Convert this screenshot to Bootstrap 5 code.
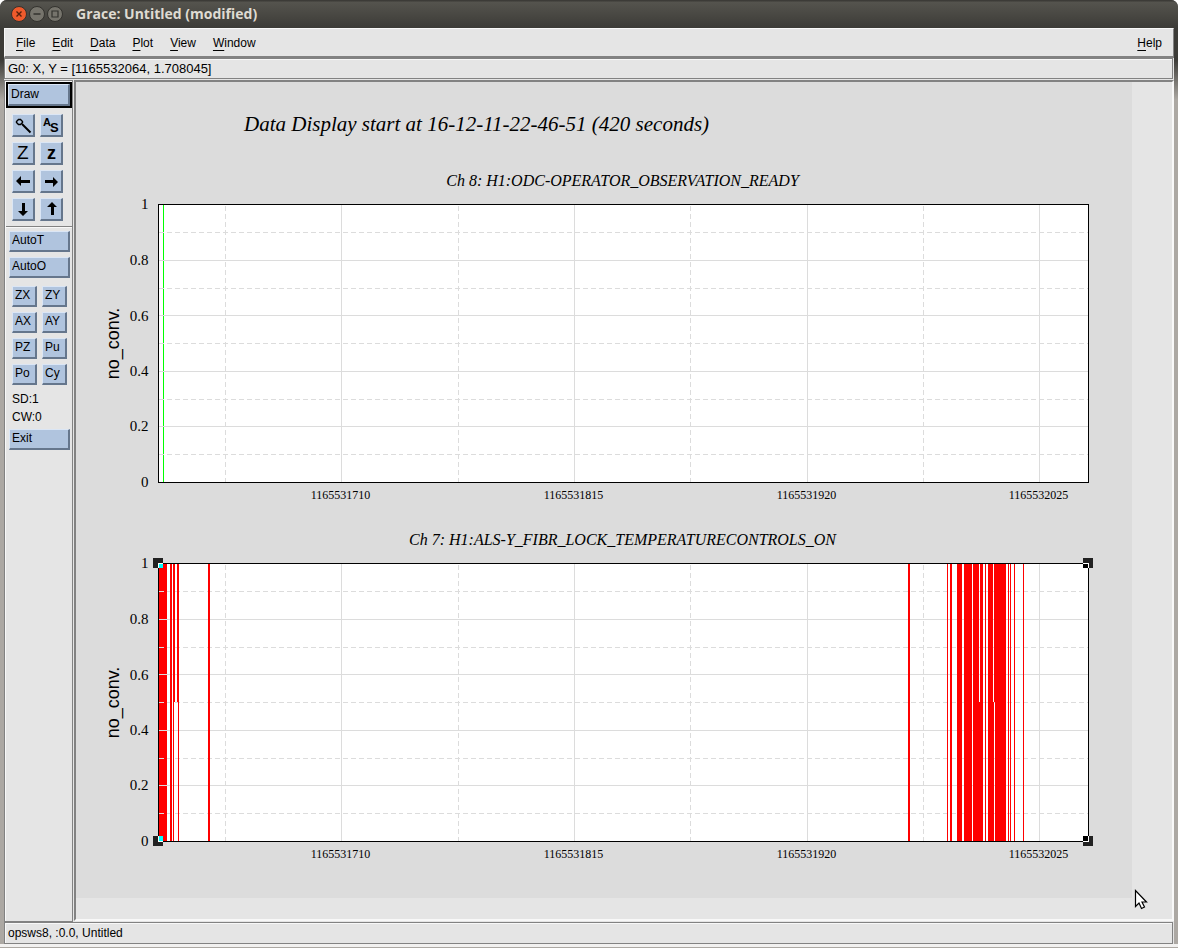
<!DOCTYPE html>
<html lang="en">
<head>
<meta charset="utf-8">
<meta name="viewport" content="width=device-width, initial-scale=1">
<title>Grace: Untitled (modified)</title>
<link href="https://cdn.jsdelivr.net/npm/bootstrap@5.3.0/dist/css/bootstrap.min.css" rel="stylesheet">
<style>
  :root { --face: #e5e5e5; --hi: #f8f8f8; --lo: #828282; --page: #dcdcdc; --blue: #b0c4de; }
  body { font: 12px/16px "Liberation Sans", Arial, sans-serif; color: #000; background: #fff; }
  .app-window { border-radius: 7px 7px 0 0; background: linear-gradient(#3c3b37 60px, #aca8a3 100px); }
  .title-bar { height: 28px; padding: 0 10px 0 11px; background: linear-gradient(#3c3b37 1px, #55544e 2px, #3c3b37); }
  .title-bar h1 { font: bold 14px/20px "Open Sans", "Noto Sans", sans-serif; color: #dfdbd2; padding-left: 13px; }
  .title-btns { gap: 2px; }
  .title-btn { width: 16px; height: 16px; }
  .title-btn svg { display: block; }
  .client { margin: 0 4px; background: var(--face); }
  .bevel-out { border: 1px solid; border-color: var(--hi) var(--lo) var(--lo) var(--hi); }
  .frame-line { border: 1px solid var(--lo); box-shadow: inset 1px 1px var(--hi); }
  .menu-bar { height: 30px; padding: 0 11px; border-bottom-width: 2px; gap: 17px; }
  .menu-item { color: inherit; line-height: 16px; }
  .menu-item u { text-underline-offset: 3px; }
  .locator { height: 21px; padding-left: 3px; margin-right: 1px; font-size: 13px; }
  .work { margin-top: 1px; }
  .tool-panel { width: 69px; padding: 1px 0 0 1px; }
  .plain-btn { background: var(--blue); border: solid; border-width: 1px 2px 2px 1px; border-color: #dbe6f5 #65768c #65768c #dbe6f5; border-radius: 0; padding: 0 2px 2px; height: 21px; line-height: 16px; font-size: 12px; text-align: left; color: #000; }
  .draw-ring { border: 2px solid #000; }
  .draw-ring .plain-btn { height: 22px; }
  .icon-grid { display: grid; grid-template-columns: 23px 23px; gap: 5px; padding: 6px 5px 5px 6px; }
  .icon-grid .plain-btn { height: 23px; padding: 0; }
  .icon-grid svg { display: block; }
  .text-grid { display: grid; grid-template-columns: 25px 25px; gap: 5px; padding: 3px 6px 5px; }
  .auto-stack { gap: 5px; padding: 3px 2px 5px 3px; }
  .exit-stack { padding: 3px 2px 0 3px; }
  .rule { border-top: 1px solid var(--lo); border-bottom: 1px solid var(--hi); }
  .readout { line-height: 18px; padding-left: 6px; }
  .canvas-frame { border: 2px solid; border-color: var(--lo) var(--hi) var(--hi) var(--lo); margin-left: 1px; margin-bottom: 1px; }
  .plot-page { display: block; background: var(--page); }
  .status-bar { height: 22px; padding-left: 3px; margin-right: 1px; }
  .bottom-edge { height: 4px; background: linear-gradient(#f2f1f0 3px, #aca8a3 3px); }
  .pointer { right: 30px; bottom: 37px; }
  .plot-page text { font-family: "Liberation Serif", "Times New Roman", serif; }
  .main-title { font-size: 21px; font-style: italic; }
  .sub-title { font-size: 16px; font-style: italic; text-anchor: middle; }
  .y-ticks { font-size: 15px; text-anchor: end; }
  .x-ticks { font-size: 12px; text-anchor: middle; }
  .plot-page .axis-name { font: 18px "Liberation Sans", Arial, sans-serif; text-anchor: middle; }
</style>
</head>
<body>
<div class="app-window d-flex flex-column vh-100 overflow-hidden position-relative">
  <header class="title-bar d-flex align-items-center flex-shrink-0">
    <div class="title-btns d-flex">
      <button type="button" class="title-btn btn p-0 border-0" aria-label="Close"><svg width="16" height="16"><circle cx="8" cy="8" r="7.5" fill="#ee5a2c" stroke="#35322e"/><path d="M5.500 5.500l5 5M10.500 5.500l-5 5" stroke="#55200c" stroke-width="1.400"/></svg></button>
      <button type="button" class="title-btn btn p-0 border-0" aria-label="Minimize"><svg width="16" height="16"><circle cx="8" cy="8" r="7.500" fill="#76746c" stroke="#33322e"/><path d="M4.500 8h7" stroke="#33322e" stroke-width="1.400"/></svg></button>
      <button type="button" class="title-btn btn p-0 border-0" aria-label="Maximize"><svg width="16" height="16"><circle cx="8" cy="8" r="7.500" fill="#76746c" stroke="#33322e"/><path d="M5 5h6v6h-6z" fill="none" stroke="#33322e" stroke-width="1.200"/></svg></button>
    </div>
    <h1 class="m-0">Grace: Untitled (modified)</h1>
  </header>

  <div class="client d-flex flex-column flex-grow-1">
    <nav class="menu-bar bevel-out d-flex align-items-center" aria-label="Main menu">
      <button type="button" class="menu-item border-0 bg-transparent p-0"><u>F</u>ile</button>
      <button type="button" class="menu-item border-0 bg-transparent p-0"><u>E</u>dit</button>
      <button type="button" class="menu-item border-0 bg-transparent p-0"><u>D</u>ata</button>
      <button type="button" class="menu-item border-0 bg-transparent p-0"><u>P</u>lot</button>
      <button type="button" class="menu-item border-0 bg-transparent p-0"><u>V</u>iew</button>
      <button type="button" class="menu-item border-0 bg-transparent p-0"><u>W</u>indow</button>
      <button type="button" class="menu-item border-0 bg-transparent p-0 ms-auto"><u>H</u>elp</button>
    </nav>
    <div class="locator frame-line d-flex align-items-center">G0: X, Y = [1165532064, 1.708045]</div>

    <main class="work d-flex flex-grow-1">
      <aside class="tool-panel frame-line flex-shrink-0">
        <div class="draw-ring"><button type="button" class="plain-btn w-100 d-block">Draw</button></div>
        <div class="icon-grid">
          <button type="button" class="plain-btn" aria-label="Zoom"><svg width="20" height="20" fill="none" stroke="#000"><path d="M5.500 4.500h2l2 2v1l-2 2h-2l-2-2v-1z" stroke-width="1.400"/><path d="M9 9l8.500 8.500" stroke-width="2"/></svg></button>
          <button type="button" class="plain-btn" aria-label="Autoscale"><svg width="20" height="20" font-family="Liberation Sans, Arial, sans-serif" font-weight="bold"><text x="2" y="11" font-size="11">A</text><text x="9" y="17" font-size="13">S</text></svg></button>
          <button type="button" class="plain-btn" aria-label="Zoom in"><svg width="20" height="20" font-family="Liberation Sans, Arial, sans-serif"><text x="4" y="16" font-size="19">Z</text></svg></button>
          <button type="button" class="plain-btn" aria-label="Zoom out"><svg width="20" height="20" font-family="Liberation Sans, Arial, sans-serif" font-weight="bold"><text x="6" y="16" font-size="18">z</text></svg></button>
          <button type="button" class="plain-btn" aria-label="Left"><svg width="20" height="20"><path d="M3 10l5-5v4h9v3H8v3z"/></svg></button>
          <button type="button" class="plain-btn" aria-label="Right"><svg width="20" height="20"><path d="M17 11l-5-5v3H4v3h8v4z"/></svg></button>
          <button type="button" class="plain-btn" aria-label="Down"><svg width="20" height="20"><path d="M10 17l-5-5h4V4h3v8h3z"/></svg></button>
          <button type="button" class="plain-btn" aria-label="Up"><svg width="20" height="20"><path d="M11 3l-5 5h4v8h3V8h3z"/></svg></button>
        </div>
        <div class="rule"></div>
        <div class="auto-stack d-flex flex-column">
          <button type="button" class="plain-btn">AutoT</button>
          <button type="button" class="plain-btn">AutoO</button>
        </div>
        <div class="text-grid">
          <button type="button" class="plain-btn">ZX</button><button type="button" class="plain-btn">ZY</button>
          <button type="button" class="plain-btn">AX</button><button type="button" class="plain-btn">AY</button>
          <button type="button" class="plain-btn">PZ</button><button type="button" class="plain-btn">Pu</button>
          <button type="button" class="plain-btn">Po</button><button type="button" class="plain-btn">Cy</button>
        </div>
        <div class="readout">SD:1</div>
        <div class="readout">CW:0</div>
        <div class="exit-stack d-flex flex-column"><button type="button" class="plain-btn">Exit</button></div>
      </aside>

      <section class="canvas-frame flex-grow-1 overflow-hidden" aria-label="Drawing canvas">
        <svg class="plot-page" width="1056" height="816" viewBox="0 0 1056 816">
          <defs>
            <g id="grid" fill="none" stroke="#dcdcdc" shape-rendering="crispEdges">
              <path d="M0 56H930M0 111H930M0 167H930M0 222H930M183 278V0M416 278V0M649 278V0M881 278V0"/>
              <path stroke-dasharray="5 3" d="M0 28H930M0 84H930M0 139H930M0 195H930M0 250H930M67 278V0M300 278V0M532 278V0M765 278V0"/>
            </g>
            <g id="labels">
              <g class="y-ticks"><text x="-10" y="4">1</text><text x="-10" y="60">0.8</text><text x="-10" y="116">0.6</text><text x="-10" y="171">0.4</text><text x="-10" y="226">0.2</text><text x="-10" y="282">0</text></g>
              <g class="x-ticks"><text x="182" y="294">1165531710</text><text x="415" y="294">1165531815</text><text x="648" y="294">1165531920</text><text x="880" y="294">1165532025</text></g>
              <text class="axis-name" transform="translate(-40 139) rotate(-90)">no_conv.</text>
            </g>
          </defs>
          <text class="main-title" x="168" y="49">Data Display start at 16-12-11-22-46-51 (420 seconds)</text>

          <!-- Channel 8 -->
          <g transform="translate(82.500 122.500)">
            <text class="sub-title" x="464" y="-19">Ch 8: H1:ODC-OPERATOR_OBSERVATION_READY</text>
            <path d="M0 0H930V278H0z" fill="#fff"/>
            <path d="M5 0V278" stroke="#0f0" shape-rendering="crispEdges"/>
            <use href="#grid"/>
            <path d="M0 0H930V278H0z" fill="none" stroke="#000" shape-rendering="crispEdges"/>
            <use href="#labels"/>
          </g>

          <!-- Channel 7 -->
          <g transform="translate(82.500 481.500)">
            <text class="sub-title" x="464" y="-19">Ch 7: H1:ALS-Y_FIBR_LOCK_TEMPERATURECONTROLS_ON</text>
            <path d="M0 0H930V278H0z" fill="#fff"/>
          </g>
          <path d="M83 481h8v278h-8z" fill="#f00"/>
          <use href="#grid" transform="translate(82.500 481.500)"/>
          <path fill="#f00" transform="translate(82 481)" d="M12 0h2v278h-2zM15 0h2v139h-1v139h-1zM19 0h2v278h-1v-139h-1zM50 0h2v278h-2z
            M750 0h2v278h-2zM789 0h1v278h-1zM792 0h2v278h-2zM799 0h5v278h-5zM806 0h8v278h-8zM815 0h6v139h1v-139h3v278h-10zM827 0h1v278h-1z
            M830 0h5v139h1v139h-6zM836 0h12v278h-11v-139h-1zM850 0h1v278h-1zM852 0h1v278h-1zM856 0h1v278h-1zM865 0h1v278h-1z"/>
          <g transform="translate(82.500 481.500)">
            <path d="M0 0H930V278H0z" fill="none" stroke="#000" shape-rendering="crispEdges"/>
            <use href="#labels"/>
          </g>
          <!-- focus markers on the frame corners -->
          <g transform="translate(82 481)" shape-rendering="crispEdges">
            <path fill="#222" d="M-5-5h10V5H-5zM-5 273h10v10H-5zM925-5h10V5h-10zM925 273h10v10h-10z"/>
            <path fill="#fff" d="M0 0h5v5H0zM0 273h5v6H0zM925 0h6v5h-6zM925 273h6v6h-6z"/>
            <path fill="#0ff" d="M1 1h4v4H1zM1 273h4v5H1z"/>
            <path d="M925 1h5v4h-5zM925 273h5v5h-5z"/>
          </g>
        </svg>
      </section>
    </main>

    <footer class="status-bar frame-line d-flex align-items-center">opsws8, :0.0, Untitled</footer>
  </div>
  <div class="bottom-edge flex-shrink-0"></div>
  <svg class="pointer position-absolute" width="14" height="22" viewBox="0 0 14 22" aria-hidden="true"><path d="M1.500 1.500v16l3.500-3.500 2.500 5.500 3-1.500-2.500-5h4.500z" fill="#fff" stroke="#000" stroke-width="1.200"/></svg>
</div>
<script src="https://cdn.jsdelivr.net/npm/bootstrap@5.3.0/dist/js/bootstrap.bundle.min.js"></script>
</body>
</html>
